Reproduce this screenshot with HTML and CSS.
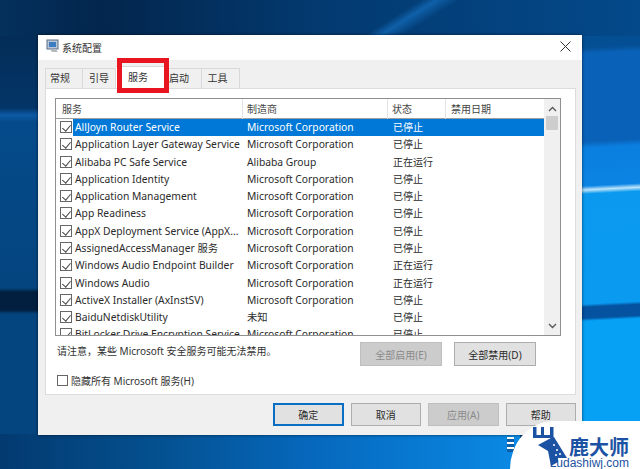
FILE: index.html
```html
<!DOCTYPE html>
<html lang="zh-CN">
<head>
<meta charset="utf-8">
<title>系统配置</title>
<link rel="stylesheet" href="styles.css">
</head>
<body>
<div class="desktop">
  <div class="label-bits"></div>
  <div class="window">
    <div class="titlebar">
      <svg class="app-icon" width="14" height="14" viewBox="0 0 14 14">
        <rect x="1" y="1" width="11" height="9" fill="#b9c8d8" stroke="#5b6f86"/>
        <rect x="3" y="3" width="7" height="5" fill="#3b7cc0"/>
        <path d="M4 10.500h6l2 2.500H6z" fill="#b5b9be"/>
      </svg>
      <span class="title">系统配置</span>
      <svg class="close" width="11" height="11" viewBox="0 0 11 11"><path d="M.5.500l10 10M10.500.500l-10 10" stroke="#333" fill="none"/></svg>
    </div>
    <div class="content">
      <div class="tabs">
        <div class="tab tab-a">常规</div>
        <div class="tab tab-b">引导</div>
        <div class="tab tab-c">服务</div>
        <div class="tab tab-d">启动</div>
        <div class="tab tab-e">工具</div>
      </div>
      <div class="panel">
        <div class="list">
          <div class="list-main">
            <div class="head">
              <div class="hc hc-1">服务</div>
              <div class="hc">制造商</div>
              <div class="hc">状态</div>
              <div class="hc hc-4">禁用日期</div>
            </div>
            <div class="rows">
              <div class="row row-sel"><span class="cb"></span><span class="name">AllJoyn Router Service</span><span class="mk">Microsoft Corporation</span><span class="st">已停止</span></div>
              <div class="row"><span class="cb"></span><span class="name">Application Layer Gateway Service</span><span class="mk">Microsoft Corporation</span><span class="st">已停止</span></div>
              <div class="row"><span class="cb"></span><span class="name">Alibaba PC Safe Service</span><span class="mk">Alibaba Group</span><span class="st">正在运行</span></div>
              <div class="row"><span class="cb"></span><span class="name">Application Identity</span><span class="mk">Microsoft Corporation</span><span class="st">已停止</span></div>
              <div class="row"><span class="cb"></span><span class="name">Application Management</span><span class="mk">Microsoft Corporation</span><span class="st">已停止</span></div>
              <div class="row"><span class="cb"></span><span class="name">App Readiness</span><span class="mk">Microsoft Corporation</span><span class="st">已停止</span></div>
              <div class="row"><span class="cb"></span><span class="name">AppX Deployment Service (AppX...</span><span class="mk">Microsoft Corporation</span><span class="st">已停止</span></div>
              <div class="row"><span class="cb"></span><span class="name">AssignedAccessManager 服务</span><span class="mk">Microsoft Corporation</span><span class="st">已停止</span></div>
              <div class="row"><span class="cb"></span><span class="name">Windows Audio Endpoint Builder</span><span class="mk">Microsoft Corporation</span><span class="st">正在运行</span></div>
              <div class="row"><span class="cb"></span><span class="name">Windows Audio</span><span class="mk">Microsoft Corporation</span><span class="st">正在运行</span></div>
              <div class="row"><span class="cb"></span><span class="name">ActiveX Installer (AxInstSV)</span><span class="mk">Microsoft Corporation</span><span class="st">已停止</span></div>
              <div class="row"><span class="cb"></span><span class="name">BaiduNetdiskUtility</span><span class="mk">未知</span><span class="st">已停止</span></div>
              <div class="row"><span class="cb"></span><span class="name">BitLocker Drive Encryption Service</span><span class="mk">Microsoft Corporation</span><span class="st">已停止</span></div>
            </div>
          </div>
          <div class="scroll">
            <svg class="arrow" width="9" height="6" viewBox="0 0 9 6"><path d="M1 5l3.500-3.500L8 5" stroke="#555" stroke-width="1.300" fill="none"/></svg>
            <div class="thumb"></div>
            <svg class="arrow arrow-down" width="9" height="6" viewBox="0 0 9 6"><path d="M1 1l3.500 3.500L8 1" stroke="#555" stroke-width="1.300" fill="none"/></svg>
          </div>
        </div>
        <div class="note-row">
          <div class="note">请注意，某些 Microsoft 安全服务可能无法禁用。</div>
          <div class="btn btn-wide btn-off">全部启用(E)</div>
          <div class="btn btn-wide">全部禁用(D)</div>
        </div>
        <label class="hide-row"><span class="cb cb-empty"></span>隐藏所有 Microsoft 服务(H)</label>
      </div>
      <div class="footer">
        <div class="btn btn-foot btn-default">确定</div>
        <div class="btn btn-foot">取消</div>
        <div class="btn btn-foot btn-off">应用(A)</div>
        <div class="btn btn-foot">帮助</div>
      </div>
    </div>
    <div class="redbox"></div>
  </div>
  <div class="mark">
    <svg class="deer" width="36" height="44" viewBox="0 0 36 44">
      <path d="M1 3h3.500v8H9V3h3v8h6V3h3.500v11H1z" fill="#1b52a3"/>
      <path d="M6 21l13-7 3-1 13 21-9 0 0 4-7 4-3-15z" fill="#1b52a3"/>
      <circle cx="25" cy="26" r="1" fill="#fff"/><circle cx="28" cy="30" r="1" fill="#fff"/><circle cx="24" cy="31" r="1" fill="#fff"/><circle cx="22" cy="21" r="1" fill="#fff"/>
    </svg>
    <div class="brand">
      <div class="brand-cn">鹿大师</div>
      <div class="brand-en">Ludashiwj.com</div>
    </div>
  </div>
</div>
</body>
</html>
```
FILE: styles.css
```css
* { box-sizing: border-box; }
html, body { margin: 0; padding: 0; }
body { width: 640px; height: 469px; overflow: hidden; font-family: "Noto Sans", "Noto Sans CJK SC", sans-serif; font-size: 10.300px; color: #2b2b2b; }

.desktop {
  position: relative; width: 640px; height: 469px; overflow: hidden;
  background-color: #04457f;
  background-repeat: no-repeat;
  background-image:
    linear-gradient(148deg, transparent 47%, rgba(20,110,190,.7) 53%, transparent 62%),
    linear-gradient(90deg, #04305c 0%, #03264d 16%, #033a70 50%, #04498a 100%),
    linear-gradient(90deg, #033a70 0%, #04508f 30%, #0668bd 60%, #0a8ae5 100%),
    linear-gradient(180deg, #03294f 0, #043568 108px, #0b5aa5 115px, #054a8a 122px, #04457f 288px, #021f40 292px, #021f40 310px, #04457f 314px, #04457f 469px),
    linear-gradient(177deg, #044a8a 0, #044f95 48px, #0a62b8 54px, #0a62b8 142px, #0a7fe0 148px, #0a84e4 186px, #bde4fa 190px, #0a99ee 194px, #0a9af0 304px, #0452a0 307px, #0452a0 318px, #06a0f5 321px, #06a0f5 469px);
  background-size: 200px 36px, 640px 36px, 520px 35px, 40px 469px, 60px 469px;
  background-position: 300px 0, 0 0, 0 434px, 0 0, 580px 0;
}
.label-bits {
  position: absolute; left: 507px; top: 437px; width: 7px; height: 15px;
  background: repeating-linear-gradient(180deg, #fff 0 2px, #0b5ea8 2px 5px);
}

.window {
  position: absolute; left: 38px; top: 35px; width: 544px; height: 400px;
  background: #f0f0f0; box-shadow: 0 0 3px rgba(0,0,0,.6);
  display: flex; flex-direction: column;
}
.titlebar { height: 25px; background: #fff; display: flex; align-items: center; padding: 0 11px 0 8px; flex: none; }
.app-icon { flex: none; margin-top: -3px; }
.title { margin-left: 2px; font-size: 10px; color: #333; margin-top: -1px; }
.close { margin-left: auto; margin-top: -3px; }

.content { flex: 1; display: flex; flex-direction: column; padding: 8px 6px 0 7px; }
.tabs { display: flex; height: 20px; flex: none; position: relative; z-index: 1; font-size: 10px; }
.tab { height: 20px; border: 1px solid #d9d9d9; border-bottom: 0; border-left: 0; background: #f0f0f0; text-align: center; line-height: 19px; color: #333; }
.tab-a { width: 38px; border-left: 1px solid #d9d9d9; padding-right: 8px; }
.tab-b { width: 33px; }
.tab-c { width: 51px; height: 22px; margin-top: -2px; background: #fff; line-height: 21px; padding-right: 6px; }
.tab-d { width: 35px; padding-right: 10px; }
.tab-e { width: 38px; padding-right: 6px; }

.panel { height: 307px; background: #fff; border: 1px solid #dcdcdc; padding: 9px 14px 0 9px; flex: none; display: flex; flex-direction: column; }

.list { height: 238px; flex: none; border: 1px solid #8f8f8f; display: flex; overflow: hidden; }
.list-main { flex: 1; min-width: 0; }
.head { height: 20px; display: grid; grid-template-columns: 187px 145px 58px 1fr; border-bottom: 1px solid #9d9d9d; background: #fff; }
.hc { padding-left: 4px; border-right: 1px solid #e3e3e3; line-height: 21px; color: #444; font-size: 10px; }
.hc-1 { padding-left: 6px; }
.hc-4 { border-right: 0; padding-left: 5px; }
.rows { height: 217px; overflow: hidden; }
.row { height: 17.270px; display: grid; grid-template-columns: 18px 169px 145px 1fr; align-items: center; line-height: 16px; white-space: nowrap; padding-bottom: 1px; position: relative; }
.row .cb { margin-left: 4px; }
.name { padding-left: 1px; }
.mk { padding-left: 4px; }
.st { padding-left: 5px; font-size: 10px; }
.row-sel { color: #fff; background: linear-gradient(90deg, transparent 17px, #0078d7 17px); }

.cb { display: inline-block; width: 12px; height: 12px; border: 1px solid #666; background: #fff; position: relative; flex: none; }
.cb::after {
  content: ""; position: absolute; left: 3px; top: 1px; width: 4px; height: 7px;
  border: solid #444; border-width: 0 1.200px 1.200px 0; transform: rotate(40deg);
}
.cb-empty { width: 11px; height: 11px; border-color: #666; }
.cb-empty::after { display: none; }

.scroll { width: 16px; flex: none; background: #f0f0f0; display: flex; flex-direction: column; align-items: center; padding: 7px 0 6px; }
.thumb { width: 12px; height: 14px; margin-top: 4px; background: #cdcdcd; }
.arrow { flex: none; }
.arrow-down { margin-top: auto; }

.note-row { display: flex; align-items: flex-start; height: 24px; margin-top: 6px; flex: none; font-size: 10px; }
.note { padding: 1px 0 0 2px; color: #333; line-height: 16px; }
.btn { height: 24px; border: 1px solid #adadad; background: #e1e1e1; display: flex; align-items: center; justify-content: center; color: #2b2b2b; flex: none; font-size: 10px; }
.btn-wide { width: 82px; }
.note-row .btn-off { margin-left: auto; }
.note-row .btn + .btn { margin-left: 12px; margin-right: 25px; }
.btn-off { background: #cccccc; border-color: #bfbfbf; color: #8a8a8a; }

.hide-row { display: flex; align-items: center; gap: 3px; height: 14px; margin-top: 7px; padding-left: 2px; flex: none; color: #333; font-size: 10px; }

.footer { display: flex; justify-content: flex-end; gap: 7px; padding: 8px 0 0; }
.btn-foot { width: 70.500px; height: 23px; }
.btn-default { border: 2px solid #0a6fc2; }

.redbox { position: absolute; left: 79px; top: 23px; width: 52px; height: 35px; border: 5px solid #e8141f; pointer-events: none; z-index: 2; }

.mark {
  position: absolute; left: 510px; top: 421px; width: 130px; height: 48px;
  background: #fff; border-top-left-radius: 44px 48px;
  display: flex; padding: 3px 0 0 22px;
}
.deer { flex: none; }
.brand { display: flex; flex-direction: column; align-items: flex-end; margin-left: -17px; width: 80px; color: #1b52a3; }
.brand-cn { font: 700 20px/20px "Noto Sans CJK SC", sans-serif; margin-top: 13px; margin-right: 2px; }
.brand-en { font: 12px/11px "Liberation Sans", sans-serif; margin-right: 2px; margin-top: 1px; white-space: nowrap; }
```
